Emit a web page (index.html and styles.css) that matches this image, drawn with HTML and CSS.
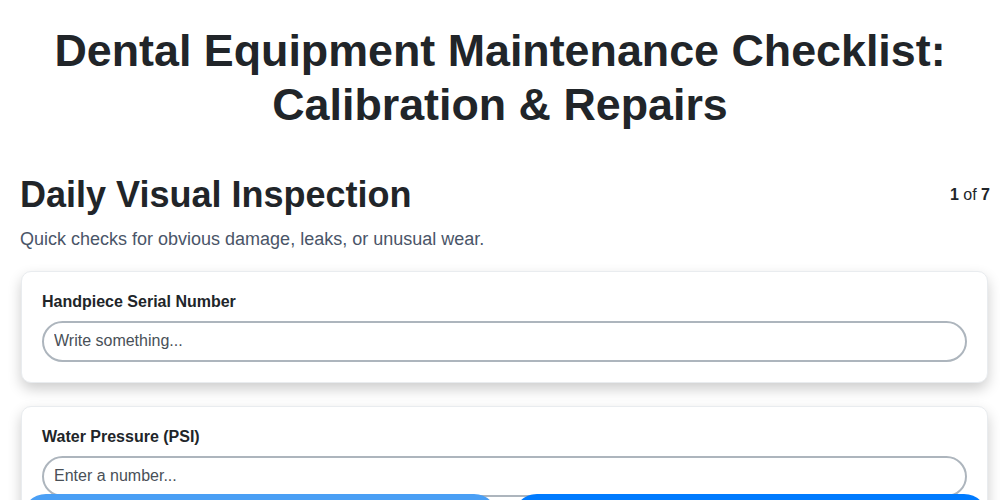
FILE: index.html
```html
<!DOCTYPE html>
<html lang="en">
<head>
<meta charset="utf-8">
<title>Dental Equipment Maintenance Checklist</title>
<link rel="stylesheet" href="styles.css">
</head>
<body>
<header class="page-header">
  <h1 class="page-title">Dental Equipment Maintenance Checklist: Calibration &amp; Repairs</h1>
</header>
<main class="step">
  <div class="step-head">
    <h2 class="step-title">Daily Visual Inspection</h2>
    <div class="step-count"><b>1</b> of <b>7</b></div>
  </div>
  <p class="step-desc">Quick checks for obvious damage, leaks, or unusual wear.</p>
  <div class="card">
    <label class="field-label" for="f1">Handpiece Serial Number</label>
    <input class="field-input" id="f1" type="text" placeholder="Write something...">
  </div>
  <div class="card">
    <label class="field-label" for="f2">Water Pressure (PSI)</label>
    <input class="field-input" id="f2" type="number" placeholder="Enter a number...">
  </div>
</main>
<nav class="step-nav">
  <button class="nav-btn nav-prev" type="button">Previous</button>
  <button class="nav-btn nav-next" type="button">Next</button>
</nav>
</body>
</html>
```
FILE: styles.css
```css
* { box-sizing: border-box; }
html, body { margin: 0; padding: 0; background: #ffffff; }
body {
  font-family: "Liberation Sans", Arial, sans-serif;
  color: #212529;
  overflow: hidden;
}
.page-header {
  padding: 24px 20px 0;
  text-align: center;
}
.page-title {
  margin: 0;
  font-size: 44.8px;
  line-height: 1.2;
  font-weight: 700;
  color: #212529;
}
.step {
  padding: 41px 12px 0 21px;
}
.step-head {
  display: flex;
  justify-content: space-between;
  align-items: center;
  margin-left: -1px;
}
.step-title {
  margin: 0;
  font-size: 36px;
  line-height: 44px;
  font-weight: 700;
}
.step-count {
  font-size: 16px;
  color: #212529;
  margin-right: -2px;
}
.step-desc {
  margin: 10px 0 20px -1px;
  font-size: 18px;
  line-height: 24px;
  color: #4a5568;
}
.card {
  border: 1px solid #e9ecef;
  border-radius: 10px;
  background: #fff;
  padding: 20px;
  margin-bottom: 23px;
  box-shadow: 0 6px 14px rgba(0, 0, 0, 0.2);
}
.field-label {
  display: block;
  font-size: 16px;
  font-weight: 700;
  line-height: 19px;
  margin-bottom: 10px;
  color: #212529;
}
.field-input {
  display: block;
  width: 100%;
  height: 41px;
  padding: 0 10px;
  border: 2px solid #adb5bd;
  border-radius: 21px;
  font-family: "Liberation Sans", Arial, sans-serif;
  font-size: 16px;
  color: #212529;
  background: #fff;
  outline: none;
}
.field-input::placeholder { color: #495057; }
.step-nav {
  position: fixed;
  top: 494px;
  left: 22px;
  right: 12px;
  display: flex;
  gap: 15px;
}
.nav-btn {
  flex: 1;
  height: 64px;
  padding-top: 16px;
  border: none;
  border-radius: 24px;
  color: #fff;
  font-family: "Liberation Sans", Arial, sans-serif;
  font-size: 16px;
  font-weight: 700;
}
.nav-prev { background: #4a9ff5; }
.nav-next { background: #007bff; }
```
